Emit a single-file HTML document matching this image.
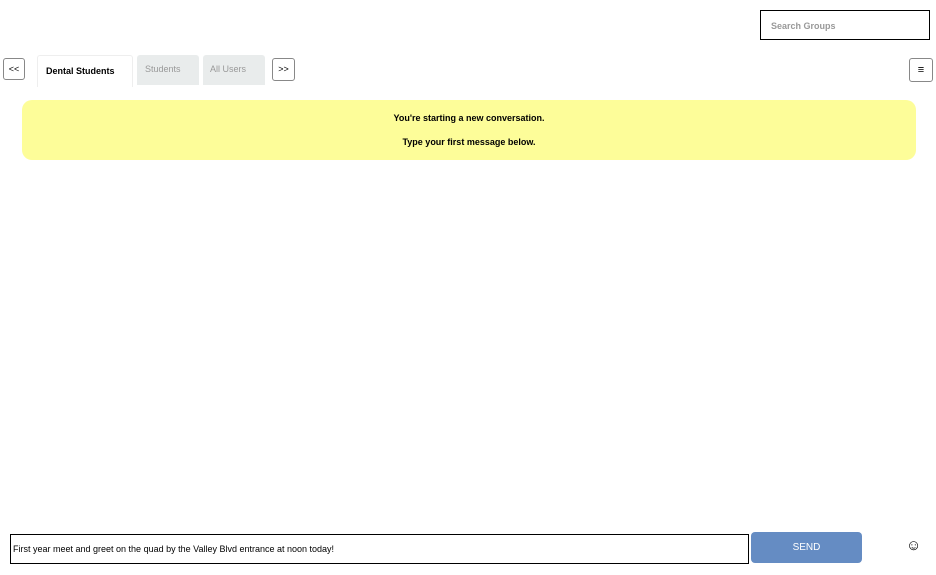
<!DOCTYPE html>
<html><head><style>
body{margin:0;width:936px;height:575px;background:#fff;font-family:"Liberation Sans",sans-serif;position:relative;overflow:hidden}
div{position:absolute;box-sizing:border-box}
.btn{border:1px solid #888;border-radius:3px;font-size:9px;text-align:center;background:#fff}
</style></head><body>
<div style="left:760px;top:10px;width:170px;height:30px;border:1px solid #000;font-size:9px;color:#999;font-weight:bold;padding:10px 0 0 10px">Search Groups</div>
<div class="btn" style="left:3px;top:58px;width:22px;height:22px;line-height:20px">&lt;&lt;</div>
<div style="left:37px;top:55px;width:96px;height:32px;border:1px solid #eee;border-bottom:none;border-radius:3px 3px 0 0;font-size:9px;font-weight:bold;padding:10px 0 0 8px">Dental Students</div>
<div style="left:137px;top:55px;width:62px;height:30px;background:#e9ecec;border-radius:3px 3px 0 0;font-size:9px;color:#999;padding:9px 0 0 8px">Students</div>
<div style="left:203px;top:55px;width:62px;height:30px;background:#e9ecec;border-radius:3px 3px 0 0;font-size:9px;color:#999;padding:9px 0 0 7px">All Users</div>
<div class="btn" style="left:272px;top:58px;width:23px;height:23px;line-height:21px">&gt;&gt;</div>
<div class="btn" style="left:909px;top:58px;width:24px;height:24px;line-height:22px;font-size:11px">≡</div>
<div style="left:22px;top:100px;width:894px;height:60px;background:#fdfd99;border-radius:10px;font-size:9px;font-weight:bold;text-align:center;padding-top:12px;line-height:12px">You're starting a new conversation.<br><br>Type your first message below.</div>
<div style="left:10px;top:534px;width:739px;height:30px;border:1px solid #000;font-size:9px;padding:9px 0 0 2px">First year meet and greet on the quad by the Valley Blvd entrance at noon today!</div>
<div style="left:751px;top:532px;width:111px;height:31px;background:#658cc3;border-radius:4px;color:#fff;font-size:10px;text-align:center;line-height:31px">SEND</div>
<div style="left:906px;top:537px;font-size:15px">☺</div>
</body></html>
